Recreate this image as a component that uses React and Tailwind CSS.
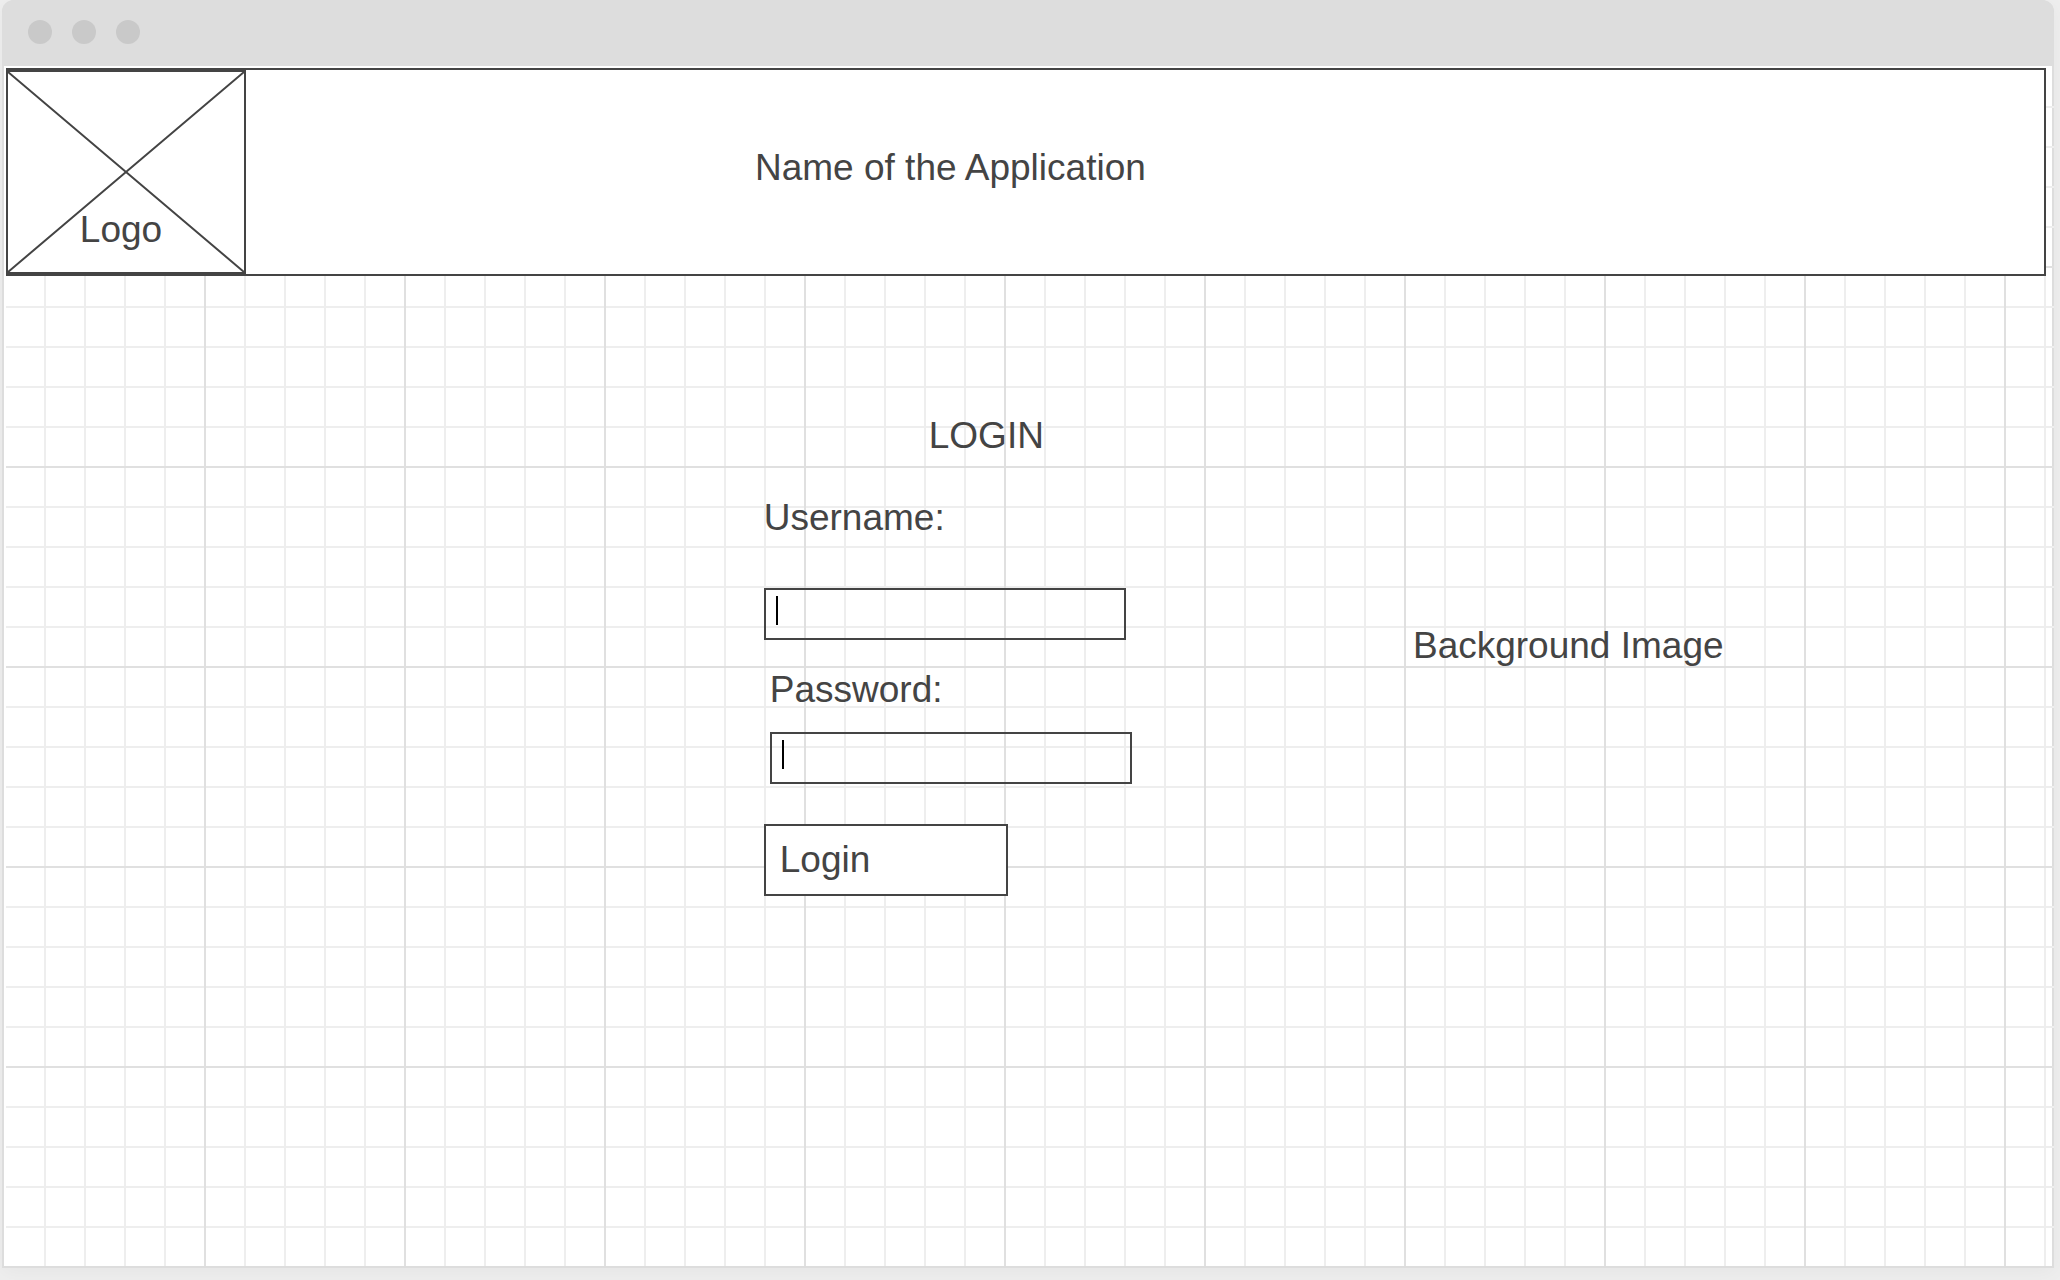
function Field({ id, label, type, gap, className }) {
  return (
    <div className={`flex flex-col ${gap} ${className}`}>
      <label htmlFor={id}>{label}</label>
      <div className="relative w-[362px]">
        <input
          id={id}
          type={type}
          className="block h-[52px] w-full border-2 border-[#444] bg-transparent px-3 text-black outline-none"
        />
        <span className="pointer-events-none absolute top-2 left-3 h-[29px] w-0.5 bg-black" />
      </div>
    </div>
  );
}

function TitleBar() {
  return (
    <div className="flex h-[66px] items-center gap-5 bg-[#ddd] px-[26px] pb-0.5">
      <span className="size-6 rounded-full bg-[#c9c9c9]" />
      <span className="size-6 rounded-full bg-[#c9c9c9]" />
      <span className="size-6 rounded-full bg-[#c9c9c9]" />
    </div>
  );
}

function Header() {
  return (
    <header className="mr-2 flex h-[208px] items-center border-2 border-[#444] bg-white">
      <div className="relative -ml-0.5 flex h-full w-[240px] items-end justify-center border-2 border-[#444] pr-2.5 pb-[22px]">
        <svg
          className="absolute inset-0 size-full"
          viewBox="0 0 236 200"
          preserveAspectRatio="none"
          fill="none"
          stroke="#444"
          strokeWidth="2"
        >
          <path d="M0 0L236 200M236 0L0 200" />
        </svg>
        <span className="relative">Logo</span>
      </div>
      <h1 className="ml-[25%] pb-2">Name of the Application</h1>
    </header>
  );
}

export default function App() {
  return (
    <div className="flex min-h-screen flex-col bg-[#eee] pr-1.5 pb-3 pl-0.5 font-['Liberation_Sans',Arial,sans-serif] text-[37px] leading-10 text-[#444]">
      <div className="flex flex-1 flex-col overflow-hidden rounded-t-xl bg-[#ddd] shadow-[0_4px_20px_rgba(0,0,0,0.04)]">
        <TitleBar />
        <div className="mx-0.5 mb-0.5 flex flex-1 flex-col bg-white pt-0.5 pl-0.5">
          <div className="-mr-0.5 flex flex-1 flex-col bg-[linear-gradient(to_right,transparent_198px,#e0e0e0_198px),linear-gradient(to_bottom,transparent_198px,#e0e0e0_198px),linear-gradient(to_right,transparent_38px,#eee_38px),linear-gradient(to_bottom,transparent_38px,#eee_38px)] bg-[length:200px_200px,200px_200px,40px_40px,40px_40px]">
            <Header />
            <main className="grid grid-cols-[370fr_317fr_313fr]">
              <form
                className="col-start-2 flex flex-col items-start pt-[140px]"
                onSubmit={(e) => e.preventDefault()}
              >
                <h2 className="ml-[165px]">LOGIN</h2>
                <Field id="username" label="Username:" type="text" gap="gap-[50px]" className="mt-[42px]" />
                <Field id="password" label="Password:" type="password" gap="gap-[22px]" className="mt-[30px] ml-1.5" />
                <button
                  type="submit"
                  className="mt-10 h-[72px] w-[244px] border-2 border-[#444] bg-white px-3.5 text-left"
                >
                  Login
                </button>
              </form>
              <p className="pt-[350px]">Background Image</p>
            </main>
          </div>
        </div>
      </div>
    </div>
  );
}
